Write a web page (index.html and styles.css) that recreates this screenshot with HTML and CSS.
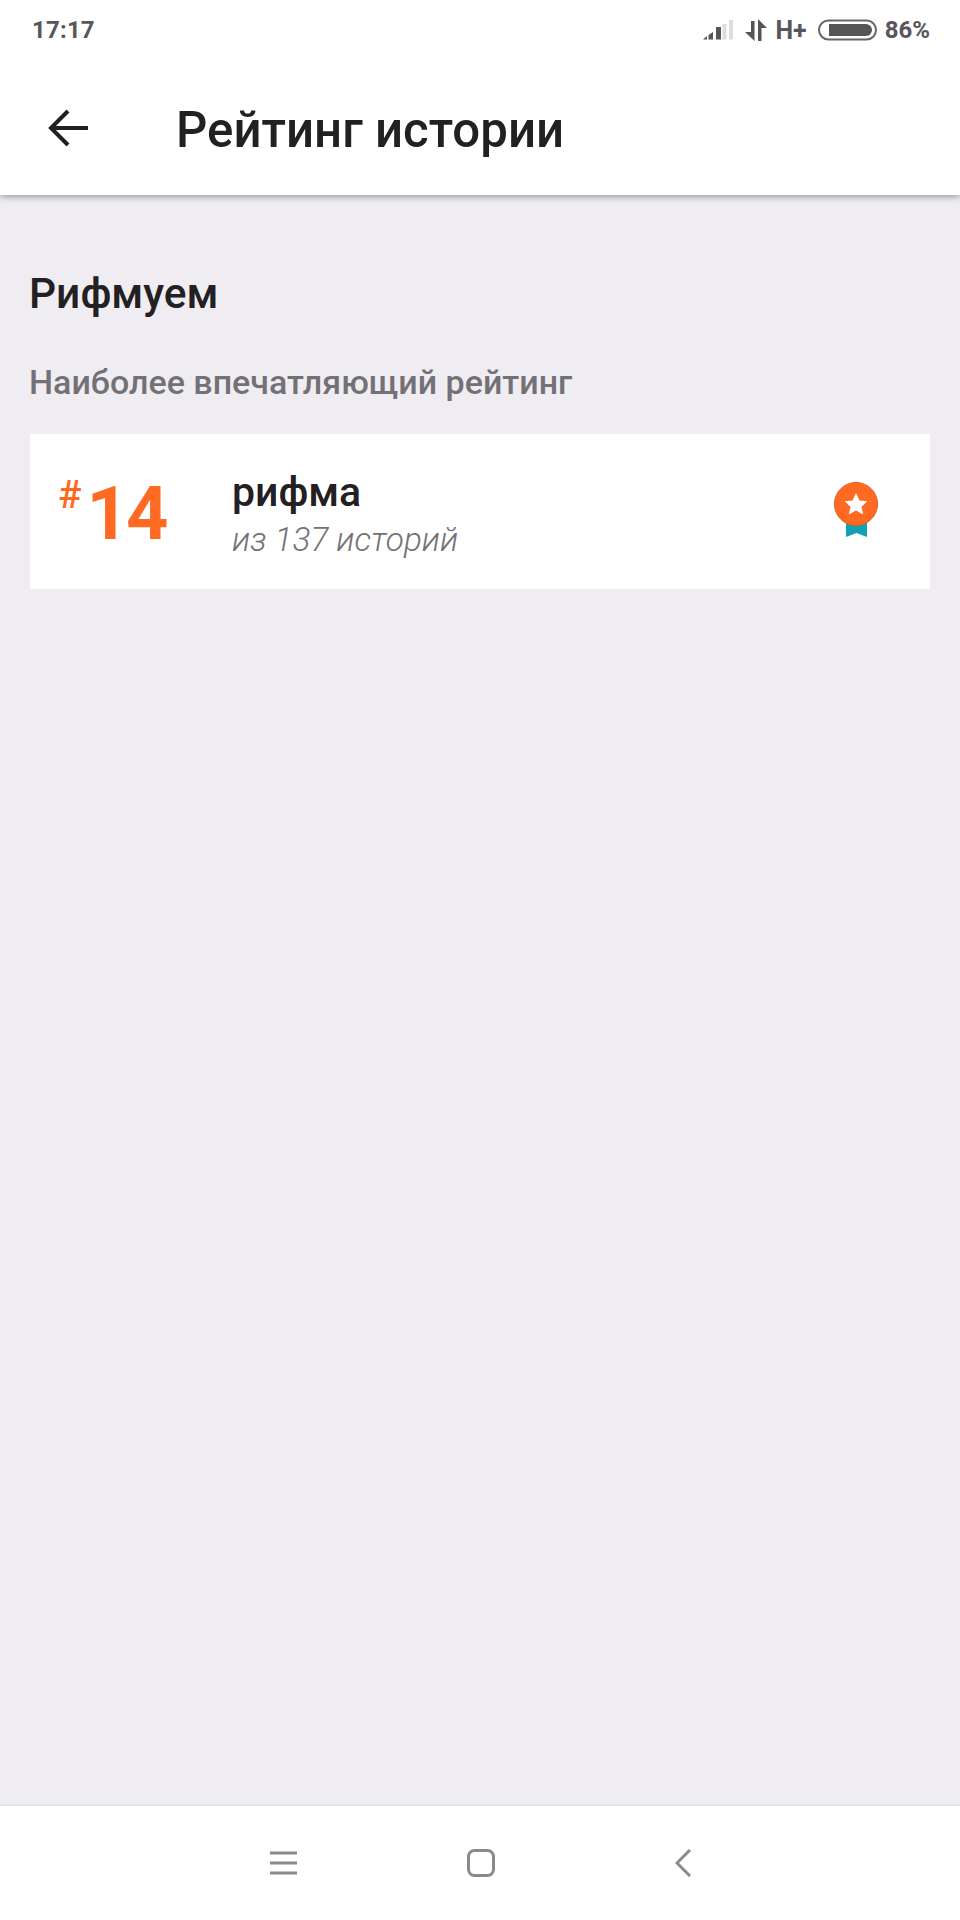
FILE: index.html
```html
<!DOCTYPE html>
<html lang="ru">
<head>
<meta charset="utf-8">
<title>Рейтинг истории</title>
<link rel="stylesheet" href="styles.css">
</head>
<body>
<div class="screen">
  <header class="top">
    <div class="status">
      <span class="time">17:17</span>
      <div class="status-right">
        <svg class="signal" width="30" height="20" viewBox="0 0 30 20">
          <path d="M0 19.500 4 16v3.500z" fill="#555"/>
          <path d="M5.500 15 10 12v7.500H5.500z" fill="#555"/>
          <rect x="13" y="7" width="5" height="12.500" fill="#555"/>
          <rect x="19.500" y="4" width="4" height="15.500" fill="#ddd"/>
          <rect x="26" y="0" width="4" height="19.500" fill="#ddd"/>
        </svg>
        <svg class="arrows" width="22" height="22" viewBox="0 0 22 22">
          <path d="M6 2h3.500v20L0 13h6z" fill="#555"/>
          <path d="M13 22V0l9 9h-5.500v13z" fill="#555"/>
        </svg>
        <span class="net">H+</span>
        <svg class="battery" width="59" height="22" viewBox="0 0 59 22">
          <rect x="1" y="1.500" width="57" height="19" rx="9.500" fill="none" stroke="#666" stroke-width="2"/>
          <path d="M11 5h37a6 6 0 0 1 0 12H11z" fill="#555"/>
        </svg>
        <span class="pct">86%</span>
      </div>
    </div>
    <div class="appbar">
      <svg class="back" width="40" height="40" viewBox="0 0 40 40">
        <path d="M40 20H4M20 3 3 20l17 17" fill="none" stroke="#222023" stroke-width="4"/>
      </svg>
      <h1 class="title">Рейтинг истории</h1>
    </div>
  </header>
  <main class="content">
    <h2 class="story">Рифмуем</h2>
    <p class="label">Наиболее впечатляющий рейтинг</p>
    <section class="card">
      <div class="rank"><span class="hash">#</span><span class="num">14</span></div>
      <div class="info">
        <div class="word">рифма</div>
        <div class="sub">из 137 историй</div>
      </div>
      <svg class="medal" width="44" height="55" viewBox="0 0 44 55">
        <path d="M12 32h21v23l-10.500-4L12 55z" fill="#12a0b4"/>
        <circle cx="22" cy="22" r="21.500" fill="#ff6a22" stroke="#e85a16" stroke-width="1"/>
        <path d="M22 11l3.400 7.400 8 .9-5.900 5.400 1.600 7.900-7.100-4-7.100 4 1.600-7.900-5.900-5.400 8-.9z" fill="#fff"/>
      </svg>
    </section>
  </main>
  <nav class="navbar">
    <svg class="nav-menu" width="27" height="24" viewBox="0 0 27 24"><path d="M0 2h27M0 12h27M0 22h27" stroke="#8a8a8c" stroke-width="3" fill="none"/></svg>
    <svg class="nav-home" width="28" height="28" viewBox="0 0 28 28"><rect x="1.500" y="1.500" width="25" height="25" rx="6" fill="none" stroke="#8a8a8c" stroke-width="3"/></svg>
    <svg class="nav-back" width="16" height="28" viewBox="0 0 16 28"><path d="M15 1 2 14l13 13" stroke="#8a8a8c" stroke-width="3" fill="none"/></svg>
  </nav>
</div>
</body>
</html>
```
FILE: styles.css
```css
* { box-sizing: border-box; }
html, body { margin: 0; padding: 0; }
body { font-family: Roboto, "Liberation Sans", sans-serif; background: #efedf1; }
.screen { width: 960px; height: 1920px; display: flex; flex-direction: column; background: #efedf1; }
.top { height: 195px; flex: none; background: #fff; box-shadow: 0 2px 6px rgba(0,0,0,.35); position: relative; }
.status { height: 60px; display: flex; align-items: center; justify-content: space-between; padding: 0 30px 0 32px; }
.time { font-size: 24px; font-weight: 700; color: #58565a; letter-spacing: .2px; }
.status-right { display: flex; align-items: center; color: #58565a; font-weight: 700; font-size: 24px; }
.signal { margin-right: 12px; }
.arrows { margin-right: 8px; }
.net { margin-right: 11px; font-size: 25px; }
.battery { margin-right: 8px; }
.appbar { height: 135px; display: flex; align-items: center; padding-left: 48px; }
.back { flex: none; margin-right: 88px; }
.title { margin: 0; font-size: 49.200px; font-weight: 500; color: #222023; line-height: 1; padding-top: 7px; }
.content { flex: 1; padding: 0 30px; display: flex; flex-direction: column; }
.story { margin: 76px 0 0 -1px; font-size: 42.500px; line-height: 46px; font-weight: 500; color: #222023; }
.label { margin: 46px 0 0 -1px; font-size: 34px; line-height: 38px; font-weight: 500; color: #737176; }
.card { margin-top: 33px; height: 155px; background: #fff; display: flex; align-items: center; padding: 0 52px 0 28px; }
.rank { width: 174px; flex: none; color: #ff6a22; display: flex; align-items: flex-start; }
.hash { font-size: 39px; font-weight: 500; line-height: 38px; margin-right: 5px; margin-top: 4px; }
.num { font-size: 74px; font-weight: 700; line-height: 74px; margin-top: 5px; letter-spacing: -3px; }
.info { flex: 1; padding-top: 5px; }
.word { font-size: 41px; line-height: 46px; font-weight: 500; color: #222023; }
.sub { font-size: 33.300px; line-height: 40px; font-weight: 300; font-style: italic; color: #737176; margin-top: 5px; }
.medal { flex: none; position: relative; top: -2px; }
.navbar { height: 116px; flex: none; background: #fff; border-top: 2px solid #e4e3e6; display: flex; align-items: center; justify-content: center; }
.nav-menu { margin-right: 170px; }
.nav-home { margin-right: 180px; }
```
